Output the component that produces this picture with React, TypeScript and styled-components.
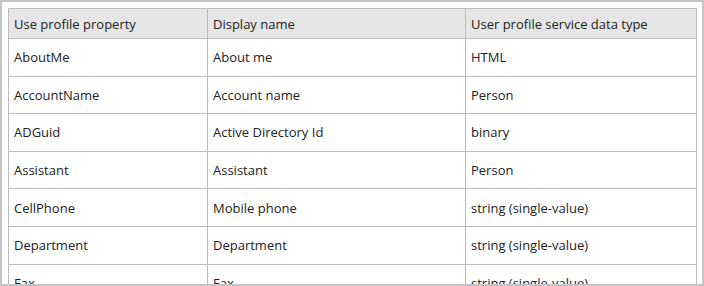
import styled, { createGlobalStyle } from "styled-components";

const Global = createGlobalStyle`
  html, body {
    margin: 0;
    padding: 0;
    background: #ffffff;
  }
`;

const Frame = styled.div`
  box-sizing: border-box;
  width: 704px;
  height: 286px;
  border: 2px solid #c4c4c4;
  padding: 6px;
  overflow: hidden;
  background: #fff;
`;

const Table = styled.table`
  width: 688px;
  border-collapse: collapse;
  table-layout: fixed;
  font-family: "Open Sans", "Noto Sans", sans-serif;
  font-size: 13px;
  color: #222;
`;

const HeadCell = styled.th`
  height: 29px;
  padding: 0 5px;
  text-align: left;
  font-weight: normal;
  background: #e6e6e6;
  border: 1px solid #bcbcbc;
  white-space: nowrap;
`;

const Cell = styled.td`
  height: 36.6px;
  padding: 0 5px;
  border: 1px solid #bcbcbc;
  white-space: nowrap;
`;

const rows: [string, string, string][] = [
  ["AboutMe", "About me", "HTML"],
  ["AccountName", "Account name", "Person"],
  ["ADGuid", "Active Directory Id", "binary"],
  ["Assistant", "Assistant", "Person"],
  ["CellPhone", "Mobile phone", "string (single-value)"],
  ["Department", "Department", "string (single-value)"],
  ["Fax", "Fax", "string (single-value)"],
  ["FirstName", "First name", "string (single-value)"],
];

export default function App() {
  return (
    <>
      <Global />
      <Frame>
        <Table>
          <colgroup>
            <col style={{ width: 199 }} />
            <col style={{ width: 258 }} />
            <col style={{ width: 231 }} />
          </colgroup>
          <thead>
            <tr>
              <HeadCell>Use profile property</HeadCell>
              <HeadCell>Display name</HeadCell>
              <HeadCell>User profile service data type</HeadCell>
            </tr>
          </thead>
          <tbody>
            {rows.map(([prop, name, type]) => (
              <tr key={prop}>
                <Cell>{prop}</Cell>
                <Cell>{name}</Cell>
                <Cell>{type}</Cell>
              </tr>
            ))}
          </tbody>
        </Table>
      </Frame>
    </>
  );
}
